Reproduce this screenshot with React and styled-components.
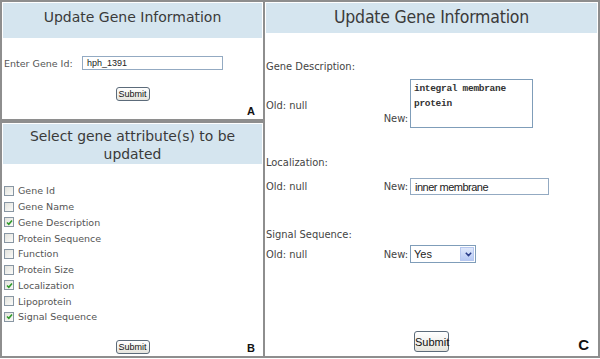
import React from 'react';
import styled, { createGlobalStyle } from 'styled-components';

const GlobalStyle = createGlobalStyle`
  html, body {
    margin: 0;
    padding: 0;
    background: #ffffff;
  }
  body {
    width: 600px;
    height: 359px;
    overflow: hidden;
    font-family: 'DejaVu Sans', Verdana, sans-serif;
  }
`;

const Page = styled.div`
  display: flex;
  width: 600px;
  height: 358px;
`;

const LeftColumn = styled.div`
  display: flex;
  flex-direction: column;
  width: 265px;
`;

const Panel = styled.section`
  box-sizing: border-box;
  border: 2px solid #8e8e8e;
  display: flex;
  flex-direction: column;
  background: #fff;
  height: ${p => p.$h ? `${p.$h}px` : 'auto'};
  ${p => p.$grow && 'flex: 1;'}
  ${p => p.$noLeft && 'border-left: 0;'}
  padding: 1px;
`;

const Header = styled.div`
  background: #d5e5ef;
  color: #3a3a3a;
  text-align: center;
  font-size: ${p => p.$size || 14}px;
  line-height: ${p => p.$lh || 18}px;
  height: ${p => p.$h}px;
  padding-top: ${p => p.$pt || 0}px;
  box-sizing: border-box;
  font-family: ${p => p.$condensed ? "'DejaVu Sans Condensed', 'DejaVu Sans', sans-serif" : "'DejaVu Sans', Verdana, sans-serif"};
  letter-spacing: ${p => p.$ls || 0}px;
`;

const Body = styled.div`
  flex: 1;
  display: flex;
  flex-direction: column;
`;

const IdRow = styled.div`
  display: flex;
  align-items: center;
  margin-top: 18px;
  padding-left: 1px;
  font-size: 9.5px;
  color: #555;
`;

const IdLabel = styled.span`
  width: 78px;
`;

const TextInput = styled.div`
  box-sizing: border-box;
  width: ${p => p.$w}px;
  height: ${p => p.$h || 14}px;
  border: 1px solid #93aac2;
  background: #fff;
  font-family: 'Liberation Sans', Arial, sans-serif;
  font-size: ${p => p.$fs || 9}px;
  color: #222;
  padding: 0 0 0 4px;
  display: flex;
  align-items: center;
  letter-spacing: ${p => p.$ls || 0}px;
`;

const TextArea = styled.div`
  box-sizing: border-box;
  width: 123px;
  height: 49px;
  border: 1px solid #7f9db9;
  background: #fff;
  font-family: 'Liberation Mono', 'Courier New', monospace;
  font-size: 9.5px;
  font-weight: bold;
  line-height: 15px;
  color: #333;
  padding: 1px 3px;
  white-space: pre-line;
  letter-spacing: -0.3px;
`;

const Footer = styled.div`
  display: grid;
  grid-template-columns: 1fr auto 1fr;
  align-items: end;
  margin-top: auto;
  padding-bottom: ${p => p.$pb || 2}px;
`;

const SubmitButton = styled.button`
  grid-column: 2;
  box-sizing: border-box;
  width: ${p => p.$w || 34}px;
  height: ${p => p.$h || 14}px;
  padding: 0;
  border: 1px solid #5c6b7a;
  border-radius: 3px;
  background: linear-gradient(#ffffff, #e6e5de);
  font-family: 'Liberation Sans', Arial, sans-serif;
  font-size: ${p => p.$fs || 9}px;
  color: #111;
  margin-bottom: ${p => p.$mb || 0}px;
`;

const FigLetter = styled.span`
  grid-column: 3;
  justify-self: end;
  margin-right: ${p => p.$mr || 7}px;
  font-family: 'Liberation Sans', Arial, sans-serif;
  font-weight: bold;
  font-size: ${p => p.$fs || 11}px;
  color: #111;
  line-height: 1;
`;

const CheckList = styled.div`
  display: flex;
  flex-direction: column;
  margin-top: 19px;
  padding-left: 1px;
`;

const CheckRow = styled.label`
  display: flex;
  align-items: center;
  height: 15.75px;
  font-size: 9.5px;
  color: #555;
`;

const Box = styled.span`
  box-sizing: border-box;
  width: 10px;
  height: 10px;
  border: 1px solid #8896a3;
  background: linear-gradient(135deg, #e2e2dc, #fbfbf9);
  margin-right: 4px;
  display: flex;
  align-items: center;
  justify-content: center;
`;

const Checkbox = ({ checked }) => (
  <Box>
    {checked && (
      <svg width="7" height="7" viewBox="0 0 7 7">
        <path d="M1 3.5 L2.8 5.3 L6 1.5" fill="none" stroke="#2f9a2a" strokeWidth="1.6" />
      </svg>
    )}
  </Box>
);

const Sheet = styled.div`
  flex: 1;
  display: flex;
  flex-direction: column;
  font-family: 'DejaVu Sans Condensed', 'DejaVu Sans', sans-serif;
  font-size: 11px;
  color: #444;
`;

const FieldTitle = styled.div`
  margin-top: ${p => p.$mt}px;
  line-height: 14px;
`;

const FieldRow = styled.div`
  display: grid;
  grid-template-columns: 115px 29px auto;
  align-items: ${p => p.$align || 'center'};
  margin-top: ${p => p.$mt}px;
`;

const OldValue = styled.span`
  align-self: center;
  padding-top: ${p => p.$pt || 0}px;
`;

const NewLabel = styled.span`
  text-align: right;
  padding-right: 2px;
  padding-bottom: ${p => p.$pb || 0}px;
`;

const SelectBox = styled.div`
  box-sizing: border-box;
  width: 66px;
  height: 18px;
  border: 1px solid #7f9db9;
  display: flex;
  align-items: center;
  justify-content: space-between;
  padding: 1px;
  font-family: 'Liberation Sans', Arial, sans-serif;
  font-size: 11px;
  color: #222;
  span {
    padding-left: 2px;
  }
`;

const DropButton = styled.span`
  width: 14px;
  height: 14px;
  background: linear-gradient(#dfe8fb, #b7c9f4);
  border: 1px solid #b6c7ef;
  box-sizing: border-box;
  display: flex;
  align-items: center;
  justify-content: center;
`;

const attributes = [
  ['Gene Id', false],
  ['Gene Name', false],
  ['Gene Description', true],
  ['Protein Sequence', false],
  ['Function', false],
  ['Protein Size', false],
  ['Localization', true],
  ['Lipoprotein', false],
  ['Signal Sequence', true],
];

const App = () => (
  <>
    <GlobalStyle />
    <Page>
      <LeftColumn>
        <Panel $h={121}>
          <Header $h={35} $pt={5} $size={14}>Update Gene Information</Header>
          <Body>
            <IdRow>
              <IdLabel>Enter Gene Id:</IdLabel>
              <TextInput $w={141} $h={14}>hph_1391</TextInput>
            </IdRow>
            <Footer $pb={1}>
              <SubmitButton $mb={16}>Submit</SubmitButton>
              <FigLetter>A</FigLetter>
            </Footer>
          </Body>
        </Panel>
        <Panel $grow>
          <Header $h={40} $pt={3} $size={13.9}>
            Select gene attribute(s) to be
            <br />
            updated
          </Header>
          <Body>
            <CheckList>
              {attributes.map(([name, checked]) => (
                <CheckRow key={name}>
                  <Checkbox checked={checked} />
                  {name}
                </CheckRow>
              ))}
            </CheckList>
            <Footer $pb={1}>
              <SubmitButton>Submit</SubmitButton>
              <FigLetter>B</FigLetter>
            </Footer>
          </Body>
        </Panel>
      </LeftColumn>
      <Panel $grow $noLeft>
        <Header $h={30} $size={17.5} $lh={26} $pt={1} $ls={-0.2} $condensed>Update Gene Information</Header>
        <Sheet>
          <FieldTitle $mt={27}>Gene Description:</FieldTitle>
          <FieldRow $mt={5} $align="end">
            <OldValue $pt={4}>Old: null</OldValue>
            <NewLabel $pb={3}>New:</NewLabel>
            <TextArea>{'integral membrane\nprotein'}</TextArea>
          </FieldRow>
          <FieldTitle $mt={28}>Localization:</FieldTitle>
          <FieldRow $mt={8}>
            <OldValue>Old: null</OldValue>
            <NewLabel>New:</NewLabel>
            <TextInput $w={139} $h={17} $fs={11} $ls={-0.5}>inner membrane</TextInput>
          </FieldRow>
          <FieldTitle $mt={33}>Signal Sequence:</FieldTitle>
          <FieldRow $mt={3}>
            <OldValue>Old: null</OldValue>
            <NewLabel>New:</NewLabel>
            <SelectBox>
              <span>Yes</span>
              <DropButton>
                <svg width="7" height="5" viewBox="0 0 7 5">
                  <path d="M0.8 0.8 L3.5 3.6 L6.2 0.8" fill="none" stroke="#2b3e8a" strokeWidth="1.5" />
                </svg>
              </DropButton>
            </SelectBox>
          </FieldRow>
          <Footer $pb={3}>
            <SubmitButton $w={35} $h={21} $fs={11}>Submit</SubmitButton>
            <FigLetter $fs={15} $mr={8}>C</FigLetter>
          </Footer>
        </Sheet>
      </Panel>
    </Page>
  </>
);

export default App;
